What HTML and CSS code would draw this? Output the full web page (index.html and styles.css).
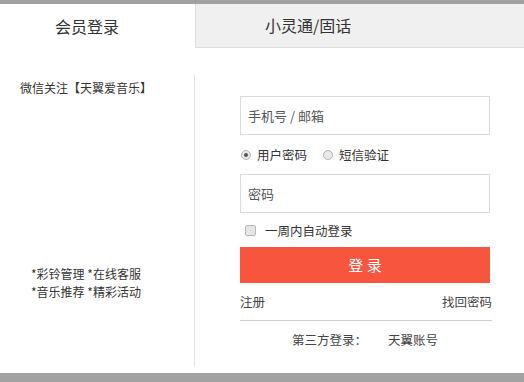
FILE: index.html
```html
<!DOCTYPE html>
<html lang="zh-CN">
<head>
<meta charset="utf-8">
<title>登录</title>
<link rel="stylesheet" href="styles.css">
</head>
<body>
<div class="page">
  <div class="topbar"></div>
  <div class="tabs">
    <div class="tab tab-active">会员登录</div>
    <div class="tab tab-other">小灵通/固话</div>
  </div>
  <div class="main">
    <div class="left">
      <div class="wechat">微信关注【天翼爱音乐】</div>
      <div class="features">
        <div>*彩铃管理 *在线客服</div>
        <div>*音乐推荐 *精彩活动</div>
      </div>
    </div>
    <div class="right">
      <div class="input">手机号 / 邮箱</div>
      <div class="radios">
        <span class="radio checked"></span><span class="rlabel">用户密码</span>
        <span class="radio second"></span><span class="rlabel">短信验证</span>
      </div>
      <div class="input">密码</div>
      <div class="remember">
        <span class="checkbox"></span><span>一周内自动登录</span>
      </div>
      <div class="btn">登 录</div>
      <div class="links">
        <span>注册</span><span>找回密码</span>
      </div>
      <div class="third">
        <span>第三方登录：</span><span class="acct">天翼账号</span>
      </div>
    </div>
  </div>
  <div class="bottombar"></div>
</div>
</body>
</html>
```
FILE: styles.css
```css
html, body {
  margin: 0;
  padding: 0;
  background: #fff;
}
.page {
  width: 524px;
  height: 382px;
  display: flex;
  flex-direction: column;
  font-family: "Noto Sans CJK SC", "Microsoft YaHei", sans-serif;
  color: #333;
  overflow: hidden;
}
.topbar {
  height: 4px;
  background: #a2a2a2;
  flex: none;
}
.tabs {
  display: flex;
  height: 44px;
  flex: none;
}
.tab {
  font-size: 16px;
  line-height: 44px;
  color: #333;
}
.tab-active {
  width: 195px;
  padding-left: 55px;
  box-sizing: border-box;
}
.tab-other {
  flex: 1;
  background: #f0f0f0;
  border-left: 1px solid #dcdcdc;
  border-bottom: 1px solid #dcdcdc;
  padding-left: 69px;
  line-height: 43px;
}
.main {
  flex: 1;
  display: flex;
}
.left {
  width: 195px;
  box-sizing: border-box;
  margin: 27px 0 6px;
  border-right: 1px solid #e3e3e3;
  display: flex;
  flex-direction: column;
  font-size: 12px;
  line-height: 18px;
  color: #333;
}
.wechat {
  margin: 4px 0 0 20px;
}
.features {
  margin: 168px 0 0 31px;
}
.right {
  margin-left: 45px;
  width: 250px;
  padding-top: 48px;
  display: flex;
  flex-direction: column;
}
.input {
  height: 39px;
  box-sizing: border-box;
  border: 1px solid #dadada;
  font-size: 13px;
  color: #555;
  line-height: 37px;
  padding-left: 7px;
}
.radios {
  display: flex;
  align-items: center;
  height: 39px;
  font-size: 12.5px;
  color: #333;
}
.radio {
  width: 10px;
  height: 10px;
  border-radius: 50%;
  border: 1px solid #b5b5b5;
  background: #e8e8e8;
  box-sizing: border-box;
  margin-left: 1px;
  position: relative;
}
.radio.checked::after {
  content: "";
  position: absolute;
  left: 2px;
  top: 2px;
  width: 4px;
  height: 4px;
  border-radius: 50%;
  background: #555;
}
.radio.second {
  margin-left: 16px;
}
.rlabel {
  margin-left: 6px;
}
.remember {
  display: flex;
  align-items: center;
  height: 34px;
  font-size: 12.5px;
  color: #333;
}
.checkbox {
  width: 11px;
  height: 11px;
  box-sizing: border-box;
  border: 1px solid #b8b8b8;
  border-radius: 2px;
  background: #e6e6e6;
  margin: 0 9px 0 5px;
}
.btn {
  height: 36px;
  background: #f8553f;
  color: #fff;
  font-size: 15px;
  line-height: 36px;
  text-align: center;
}
.links {
  display: flex;
  justify-content: space-between;
  font-size: 12.5px;
  color: #444;
  height: 37px;
  line-height: 37px;
  border-bottom: 1px solid #cfcfcf;
  margin-right: -2px;
}
.third {
  font-size: 12.5px;
  color: #444;
  line-height: 38px;
  padding-left: 52px;
}
.acct {
  margin-left: 21px;
}
.bottombar {
  height: 9px;
  background: #a2a2a2;
  flex: none;
}
```
